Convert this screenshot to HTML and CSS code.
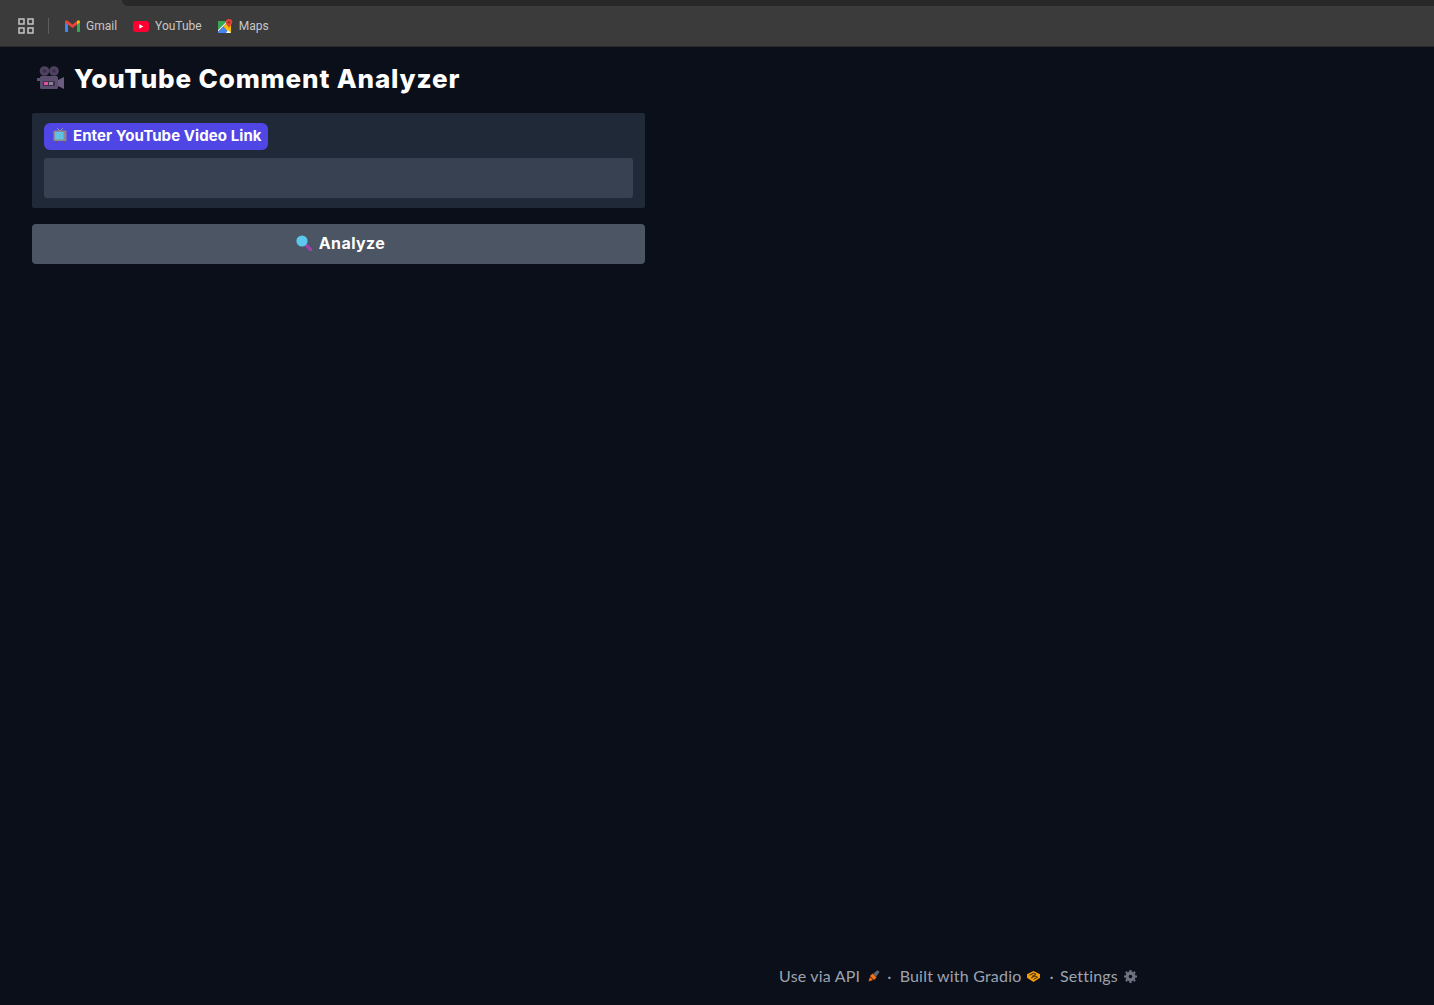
FILE: index.html
```html
<!DOCTYPE html>
<html lang="en">
<head>
  <meta charset="UTF-8">
  <title>YouTube Comment Analyzer</title>
  <link rel="stylesheet" href="styles.css">
</head>
<body>
  <div class="chrome-bar">
    <div class="tab-edge"></div>
    <svg class="apps-icon" width="16" height="16" viewBox="0 0 16 16" fill="none" stroke="#c4c7c5" stroke-width="1.5">
      <rect x="1" y="1" width="5" height="5"/><rect x="10" y="1" width="5" height="5"/>
      <rect x="1" y="10" width="5" height="5"/><rect x="10" y="10" width="5" height="5"/>
    </svg>
    <span class="bar-divider"></span>
    <a class="bookmark bookmark-gmail">
      <svg width="15" height="12" viewBox="0 0 15 12">
        <path d="M0 2 L0 11 Q0 12 1 12 L3 12 L3 4Z" fill="#4285f4"/>
        <path d="M15 2 L15 11 Q15 12 14 12 L12 12 L12 4Z" fill="#34a853"/>
        <path d="M0 1.5 Q1 -0.5 3 1 L7.5 4.5 L12 1 L12 4.5 L7.5 8 L3 4.5 L0 2.5Z" fill="#ea4335"/>
        <path d="M12 1 Q14 -0.5 15 1.5 L15 2.5 L12 4.5Z" fill="#fbbc04"/>
      </svg>
      Gmail
    </a>
    <a class="bookmark bookmark-youtube">
      <svg width="16" height="11" viewBox="0 0 16 11">
        <rect width="16" height="11" rx="3" fill="#ff0033"/>
        <path d="M6.3 3.2 L10.3 5.5 L6.3 7.8Z" fill="#fff"/>
      </svg>
      YouTube
    </a>
    <a class="bookmark bookmark-maps">
      <svg width="15" height="15" viewBox="0 0 15 15">
        <path d="M0 2 L9 2 L0 11Z" fill="#34a853"/>
        <path d="M9 2 L0 11 L0 13 L11 2Z" fill="#e8eaed"/>
        <path d="M0 14 L0 13 L5.5 7.5 L11 14Z" fill="#4285f4"/>
        <path d="M5.5 7.5 L11 2 L13 5 L13 14 L11 14Z" fill="#fbbc04"/>
        <path d="M8 14 L10 11 L13 14Z" fill="#f1f3f4"/>
        <path d="M11 0 A3.3 3.3 0 0 1 14.3 3.3 C14.3 5.5 11.8 7 11 9 C10.2 7 7.7 5.5 7.7 3.3 A3.3 3.3 0 0 1 11 0Z" fill="#db4437"/>
        <circle cx="11" cy="3.3" r="1.1" fill="#8f2a20"/>
      </svg>
      Maps
    </a>
  </div>

  <div class="page">
    <main class="main-col">
      <h1 class="title">
        <svg class="title-icon" width="27" height="24" viewBox="0 0 27 24">
          <circle cx="7.5" cy="5" r="4.8" fill="#4f4160"/>
          <circle cx="7.5" cy="5" r="1.8" fill="#3a3048"/>
          <circle cx="17" cy="5" r="4.8" fill="#4f4160"/>
          <circle cx="17" cy="5" r="1.8" fill="#3a3048"/>
          <rect x="0" y="12" width="6" height="3" fill="#5f5270"/>
          <rect x="3" y="10" width="18" height="13" rx="1.5" fill="#5b4d6e"/>
          <rect x="6" y="15" width="12" height="5" rx="1" fill="#3a3048"/>
          <rect x="7" y="16" width="4" height="3" fill="#e0559a"/>
          <rect x="12" y="16" width="4" height="3" fill="#8b7f9c"/>
          <path d="M21 14 L27 11 L27 23 L21 20Z" fill="#6b5c80"/>
        </svg>
        YouTube Comment Analyzer
      </h1>

      <div class="input-block">
        <label class="input-label" for="video-link">
          <svg width="14" height="15" viewBox="0 0 14 15">
            <path d="M4 0 L7 3 L10 0" fill="none" stroke="#9a9a9a" stroke-width="1"/>
            <rect x="0.5" y="2.5" width="13" height="10.5" rx="1" fill="#8d8a94"/>
            <rect x="2" y="4" width="8.5" height="7.5" fill="#5fc3e4"/>
            <rect x="11.3" y="4.5" width="1.4" height="1.4" fill="#e0559a"/>
            <rect x="2" y="13" width="2" height="1.5" fill="#5c5962"/>
            <rect x="10" y="13" width="2" height="1.5" fill="#5c5962"/>
          </svg>
          Enter YouTube Video Link
        </label>
        <input class="text-input" id="video-link" type="text">
      </div>

      <button class="analyze-btn">
        <svg class="analyze-icon" width="16" height="16" viewBox="0 0 16 16">
          <path d="M9 9 L14.5 14.5" stroke="#a23fa8" stroke-width="3.2" stroke-linecap="round"/>
          <circle cx="6" cy="6" r="5.6" fill="#5cc8ee"/>
        </svg>
        Analyze
      </button>
    </main>

    <footer class="footer">
      <a class="footer-link">Use via API
        <svg class="rocket" width="12" height="12" viewBox="0 0 12 12">
          <path d="M5 4 L9 0.5 Q11 0 11.5 2 L8 7Z" fill="#5f6470"/>
          <path d="M4.5 3.5 L8.5 7.5 L6 10 L2 6Z" fill="#f97316"/>
          <path d="M2 7 L5 10 L0.5 11.5Z" fill="#f97316"/>
        </svg>
      </a>
      <span class="dot dot-api">·</span>
      <a class="footer-link">Built with Gradio
        <svg class="gradio-logo" width="13" height="11" viewBox="0 0 13 11">
          <path d="M6.5 0 L13 3.2 L13 6.8 L6.5 11 L0 6.8 L0 3.2Z" fill="#f59e0b"/>
          <path d="M2.5 4.2 L6.5 2.2 L9 3.4 L5 5.4 M4 7 L8 5 L10.5 6.2 L6.5 8.4" fill="none" stroke="#3a2a10" stroke-width="1"/>
        </svg>
      </a>
      <span class="dot dot-gradio">·</span>
      <a class="footer-link">Settings
        <svg class="gear" width="13" height="13" viewBox="0 0 13 13">
          <circle cx="6.5" cy="6.5" r="3.4" fill="none" stroke="#6b7280" stroke-width="3.2"/>
          <path d="M6.5 0 V2 M6.5 11 V13 M0 6.5 H2 M11 6.5 H13 M1.9 1.9 L3.2 3.2 M9.8 9.8 L11.1 11.1 M11.1 1.9 L9.8 3.2 M3.2 9.8 L1.9 11.1" stroke="#6b7280" stroke-width="2.2"/>
        </svg>
      </a>
    </footer>
  </div>
</body>
</html>
```

FILE: styles.css
```css
html, body {
  margin: 0;
  padding: 0;
  height: 100%;
  background: #0b0f19;
  overflow: hidden;
  font-family: 'Inter', 'Liberation Sans', sans-serif;
  color: #fff;
}
body {
  display: flex;
  flex-direction: column;
}
.chrome-bar {
  position: relative;
  flex: none;
  height: 47px;
  background: #3b3b3b;
  border-bottom: 1px solid #2a2a2a;
  display: flex;
  align-items: center;
  padding: 6px 0 0 18px;
  box-sizing: border-box;
  font-family: 'Roboto', 'Liberation Sans', sans-serif;
  font-size: 12px;
  color: #c7c7c7;
}
.tab-edge {
  position: absolute;
  top: 0;
  left: 122px;
  right: 0;
  height: 6px;
  background: #282828;
  border-bottom-left-radius: 12px;
}
.bar-divider {
  width: 1px;
  height: 16px;
  background: #5e5e5e;
  margin: 0 16px 0 14px;
}
.bookmark {
  display: flex;
  align-items: center;
  gap: 6px;
  margin-right: 16px;
}
.page {
  flex: 1;
  display: flex;
  flex-direction: column;
  justify-content: space-between;
  min-height: 0;
}
.main-col {
  width: 613px;
  margin-left: 32px;
  display: flex;
  flex-direction: column;
}
.title {
  margin: 0;
  height: 66px;
  box-sizing: border-box;
  display: flex;
  align-items: center;
  gap: 11px;
  padding: 0 0 4px 5px;
  font-size: 26px;
  font-weight: 800;
  letter-spacing: 0.85px;
}
.title-icon {
  margin-right: -1px;
}
.input-block {
  background: #1f2937;
  border-radius: 2px;
  padding: 10px 12px;
  display: flex;
  flex-direction: column;
  align-items: flex-start;
  gap: 8px;
}
.input-label {
  height: 27px;
  display: flex;
  align-items: center;
  gap: 6px;
  padding: 0 6px 2px 9px;
  background: #4f46e5;
  border-radius: 6px;
  font-size: 15px;
  font-weight: 700;
  letter-spacing: 0.08px;
  box-sizing: border-box;
}
.text-input {
  width: 100%;
  height: 40px;
  box-sizing: border-box;
  background: #374151;
  border: none;
  border-radius: 3px;
  outline: none;
}
.analyze-btn {
  margin-top: 16px;
  height: 40px;
  padding: 0 0 3px 4px;
  background: #4b5563;
  border: none;
  border-radius: 4px;
  color: #fff;
  font-family: inherit;
  font-size: 16px;
  font-weight: 700;
  letter-spacing: 0.4px;
  display: flex;
  align-items: center;
  justify-content: center;
  gap: 7px;
  cursor: pointer;
}
.analyze-icon {
  flex: none;
}
.footer {
  flex: none;
  height: 56px;
  box-sizing: border-box;
  padding: 0 297px 4px 0;
  display: flex;
  align-items: center;
  justify-content: flex-end;
  gap: 8px;
  font-family: 'Lato', 'Liberation Sans', sans-serif;
  font-size: 16px;
  letter-spacing: 0.2px;
  color: #9ca3af;
}
.footer-link {
  display: flex;
  align-items: center;
  gap: 6px;
}
.footer-link svg {
  margin-top: 2px;
}
.rocket {
  margin-left: 2px;
}
.gradio-logo {
  margin-left: -1px;
}
.dot-api {
  margin-left: -1px;
}
.dot-gradio {
  margin: 0 -2px 0 2px;
}
```
